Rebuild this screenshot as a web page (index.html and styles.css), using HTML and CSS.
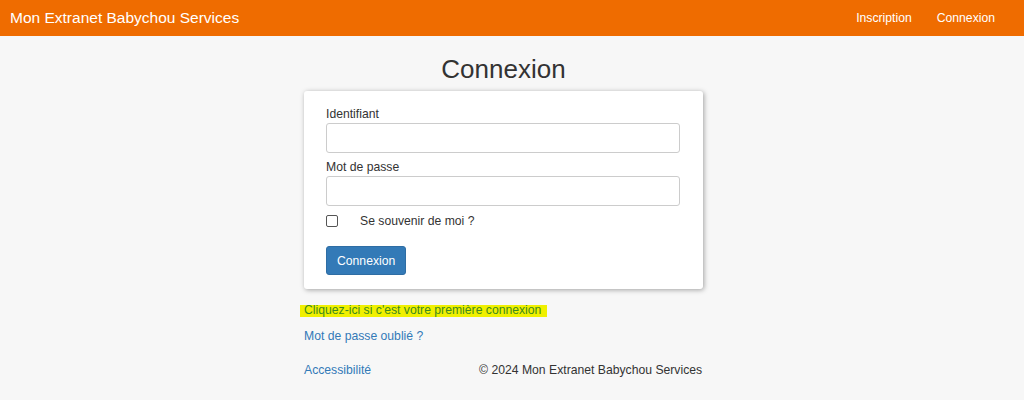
FILE: index.html
```html
<!DOCTYPE html>
<html lang="fr">
<head>
<meta charset="utf-8">
<title>Connexion</title>
<link rel="stylesheet" href="styles.css">
</head>
<body>
<header class="navbar">
  <a class="brand" href="#">Mon Extranet Babychou Services</a>
  <nav class="nav">
    <a href="#">Inscription</a>
    <a href="#">Connexion</a>
  </nav>
</header>
<main class="main">
  <div class="container">
    <h1 class="title">Connexion</h1>
    <form class="card">
      <label class="label" for="id">Identifiant</label>
      <input class="input" id="id" type="text">
      <label class="label" for="pw">Mot de passe</label>
      <input class="input" id="pw" type="password">
      <div class="check">
        <span class="box"></span>
        <span class="check-text">Se souvenir de moi ?</span>
      </div>
      <button class="btn" type="button">Connexion</button>
    </form>
    <div class="links">
      <a class="link first" href="#">Cliquez-ici si c'est votre première connexion</a>
      <a class="link" href="#">Mot de passe oublié ?</a>
    </div>
    <footer class="footer">
      <a class="link" href="#">Accessibilité</a>
      <span class="copy">© 2024 Mon Extranet Babychou Services</span>
    </footer>
  </div>
</main>
</body>
</html>
```
FILE: styles.css
```css
* { box-sizing: border-box; }
html, body { margin: 0; padding: 0; }
body {
  background: #f7f7f7;
  font-family: "Liberation Sans", Arial, sans-serif;
  font-size: 12.2px;
  color: #333;
  height: 400px;
  overflow: hidden;
}
a { text-decoration: none; }
.navbar {
  height: 36px;
  background: #ef6c00;
  display: flex;
  align-items: center;
  justify-content: space-between;
  padding: 0 29px 0 10px;
}
.brand {
  color: #fff;
  font-size: 15.5px;
}
.nav { display: flex; gap: 25px; }
.nav a { color: #fff; font-size: 12.2px; }
.main { padding-right: 17px; }
.container {
  width: 399px;
  margin: 0 auto;
}
.title {
  margin: 17px 0 6px;
  font-size: 26px;
  line-height: 32px;
  font-weight: normal;
  text-align: center;
  color: #333;
}
.card {
  background: #fff;
  border-radius: 3px;
  box-shadow: 1px 1px 5px rgba(0,0,0,0.35);
  padding: 15px 23px 14px 22px;
  display: flex;
  flex-direction: column;
  align-items: flex-start;
}
.label {
  line-height: 17px;
}
.input {
  width: 100%;
  height: 30px;
  border: 1px solid #ccc;
  border-radius: 3px;
  margin: 0 0 6px;
  background: #fff;
}
.check {
  display: flex;
  align-items: center;
  height: 17px;
  margin-top: 0;
}
.box {
  width: 12px;
  height: 12px;
  border: 1px solid #555;
  border-radius: 2px;
}
.check-text { margin-left: 22px; }
.btn {
  margin-top: 17px;
  background: #337ab7;
  border: 1px solid #2e6da4;
  border-radius: 3px;
  color: #fff;
  font-family: inherit;
  font-size: 12.2px;
  height: 29px;
  padding: 0 10px;
}
.links {
  display: flex;
  flex-direction: column;
  align-items: flex-start;
  margin-top: 13px;
  gap: 9px;
}
.link {
  color: #337ab7;
  line-height: 17px;
}
.first {
  color: #3d8a1e;
  background: linear-gradient(to bottom, transparent 3px, #f0f000 3px, #f0f000 15px, transparent 15px);
  padding: 0 6px 0 4px;
  margin-left: -4px;
}
.footer {
  display: flex;
  margin-top: 17px;
  line-height: 17px;
}
.copy { margin-left: 108px; color: #333; }
```
